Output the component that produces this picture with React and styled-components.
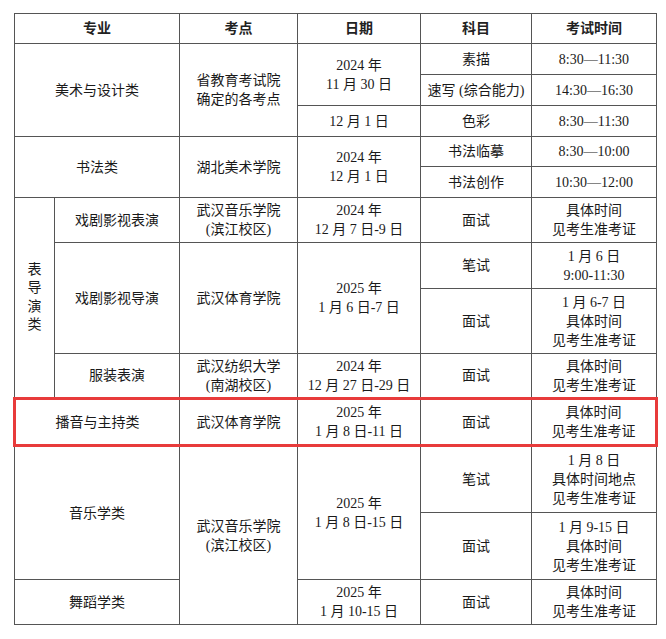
import React from 'react'
import styled, { createGlobalStyle } from 'styled-components'

const GlobalStyle = createGlobalStyle`
    body {
        margin: 0;
        background: #fff;
        font-family: "Liberation Serif", "Noto Sans CJK SC", serif;
    }
`

const Page = styled.div`
    padding: 13px 0 0 13px;
    width: 666px;
    height: 639px;
    box-sizing: border-box;
`

const Table = styled.table`
    border-collapse: collapse;
    table-layout: fixed;
    width: 642px;
    font-size: 14px;
    line-height: 19px;
    color: #1a1a1a;
    border: 1px solid #444;
`

const Row = styled.tr`
    height: ${p => p.$h}px;
`

const HeadCell = styled.th`
    border: 1px solid #555;
    font-weight: 700;
    text-align: center;
    vertical-align: middle;
    padding: 0;
    color: #222;
`

const Cell = styled.td`
    border: 1px solid #555;
    border-left-color: ${p => (p.$light ? '#999' : '#555')};
    text-align: center;
    vertical-align: middle;
    padding: 0 2px;
    white-space: nowrap;
    ${p => p.$hl && `
        border-top: 3px solid #e83b3b;
        border-bottom: 3px solid #e83b3b;
    `}
    ${p => p.$hlLeft && `border-left: 3px solid #e83b3b;`}
    ${p => p.$hlRight && `border-right: 3px solid #e83b3b;`}
`

const Vertical = styled.span`
    display: inline-block;
    width: 1em;
    line-height: 18.5px;
    white-space: normal;
    word-break: break-all;
`

const Lines = ({ children }) => children.map((t, i) => <div key={i}>{t}</div>)

const SEE = ['具体时间', '见考生准考证']

export default function App() {
    return (
        <Page>
            <GlobalStyle />
            <Table>
                <colgroup>
                    <col style={{ width: 40 }} />
                    <col style={{ width: 125 }} />
                    <col style={{ width: 118 }} />
                    <col style={{ width: 123 }} />
                    <col style={{ width: 111 }} />
                    <col style={{ width: 125 }} />
                </colgroup>
                <tbody>
                    <Row $h={30}>
                        <HeadCell colSpan={2}>专业</HeadCell>
                        <HeadCell>考点</HeadCell>
                        <HeadCell>日期</HeadCell>
                        <HeadCell>科目</HeadCell>
                        <HeadCell>考试时间</HeadCell>
                    </Row>

                    <Row $h={31}>
                        <Cell colSpan={2} rowSpan={3}>美术与设计类</Cell>
                        <Cell rowSpan={3}><Lines>{['省教育考试院', '确定的各考点']}</Lines></Cell>
                        <Cell rowSpan={2} $light><Lines>{['2024 年', '11 月 30 日']}</Lines></Cell>
                        <Cell>素描</Cell>
                        <Cell>8:30—11:30</Cell>
                    </Row>
                    <Row $h={31}>
                        <Cell>速写 (综合能力)</Cell>
                        <Cell>14:30—16:30</Cell>
                    </Row>
                    <Row $h={31}>
                        <Cell $light>12 月 1 日</Cell>
                        <Cell>色彩</Cell>
                        <Cell>8:30—11:30</Cell>
                    </Row>

                    <Row $h={30}>
                        <Cell colSpan={2} rowSpan={2}>书法类</Cell>
                        <Cell rowSpan={2}>湖北美术学院</Cell>
                        <Cell rowSpan={2} $light><Lines>{['2024 年', '12 月 1 日']}</Lines></Cell>
                        <Cell>书法临摹</Cell>
                        <Cell>8:30—10:00</Cell>
                    </Row>
                    <Row $h={31}>
                        <Cell>书法创作</Cell>
                        <Cell>10:30—12:00</Cell>
                    </Row>

                    <Row $h={45}>
                        <Cell rowSpan={4}><Vertical>表导演类</Vertical></Cell>
                        <Cell>戏剧影视表演</Cell>
                        <Cell><Lines>{['武汉音乐学院', '(滨江校区)']}</Lines></Cell>
                        <Cell $light><Lines>{['2024 年', '12 月 7 日-9 日']}</Lines></Cell>
                        <Cell>面试</Cell>
                        <Cell><Lines>{SEE}</Lines></Cell>
                    </Row>
                    <Row $h={46}>
                        <Cell rowSpan={2}>戏剧影视导演</Cell>
                        <Cell rowSpan={2}>武汉体育学院</Cell>
                        <Cell rowSpan={2} $light><Lines>{['2025 年', '1 月 6 日-7 日']}</Lines></Cell>
                        <Cell>笔试</Cell>
                        <Cell><Lines>{['1 月 6 日', '9:00-11:30']}</Lines></Cell>
                    </Row>
                    <Row $h={65}>
                        <Cell>面试</Cell>
                        <Cell><Lines>{['1 月 6-7 日', ...SEE]}</Lines></Cell>
                    </Row>
                    <Row $h={45}>
                        <Cell>服装表演</Cell>
                        <Cell><Lines>{['武汉纺织大学', '(南湖校区)']}</Lines></Cell>
                        <Cell $light><Lines>{['2024 年', '12 月 27 日-29 日']}</Lines></Cell>
                        <Cell>面试</Cell>
                        <Cell><Lines>{SEE}</Lines></Cell>
                    </Row>

                    <Row $h={47}>
                        <Cell colSpan={2} $hl $hlLeft>播音与主持类</Cell>
                        <Cell $hl>武汉体育学院</Cell>
                        <Cell $hl $light><Lines>{['2025 年', '1 月 8 日-11 日']}</Lines></Cell>
                        <Cell $hl>面试</Cell>
                        <Cell $hl $hlRight><Lines>{SEE}</Lines></Cell>
                    </Row>

                    <Row $h={67}>
                        <Cell colSpan={2} rowSpan={2}>音乐学类</Cell>
                        <Cell rowSpan={3}><Lines>{['武汉音乐学院', '(滨江校区)']}</Lines></Cell>
                        <Cell rowSpan={2} $light><Lines>{['2025 年', '1 月 8 日-15 日']}</Lines></Cell>
                        <Cell>笔试</Cell>
                        <Cell><Lines>{['1 月 8 日', '具体时间地点', '见考生准考证']}</Lines></Cell>
                    </Row>
                    <Row $h={67}>
                        <Cell>面试</Cell>
                        <Cell><Lines>{['1 月 9-15 日', ...SEE]}</Lines></Cell>
                    </Row>
                    <Row $h={45}>
                        <Cell colSpan={2}>舞蹈学类</Cell>
                        <Cell $light><Lines>{['2025 年', '1 月 10-15 日']}</Lines></Cell>
                        <Cell>面试</Cell>
                        <Cell><Lines>{SEE}</Lines></Cell>
                    </Row>
                </tbody>
            </Table>
        </Page>
    )
}
